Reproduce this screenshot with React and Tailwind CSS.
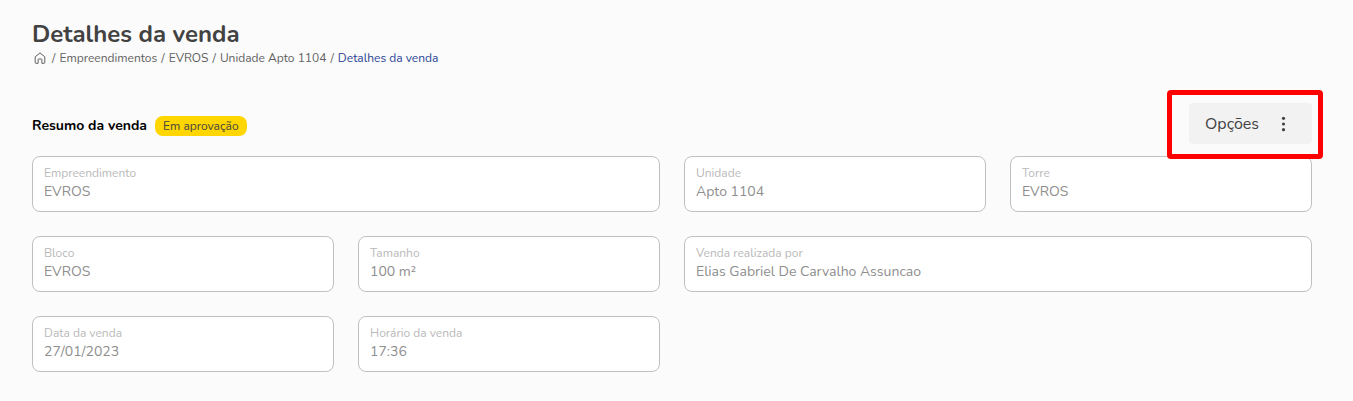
import React, { useId } from "react";

const fields = [
  { label: "Empreendimento", value: "EVROS", span: "col-span-2" },
  { label: "Unidade", value: "Apto 1104", span: "col-span-1" },
  { label: "Torre", value: "EVROS", span: "col-span-1" },
  { label: "Bloco", value: "EVROS", span: "col-span-1" },
  { label: "Tamanho", value: "100 m²", span: "col-span-1" },
  { label: "Venda realizada por", value: "Elias Gabriel De Carvalho Assuncao", span: "col-span-2" },
  { label: "Data da venda", value: "27/01/2023", span: "col-span-1" },
  { label: "Horário da venda", value: "17:36", span: "col-span-1" },
];

const crumbs = ["Empreendimentos", "EVROS", "Unidade Apto 1104"];

function Field({ label, value, span }) {
  const id = useId();
  return (
    <div className={`${span} flex h-14 min-w-0 flex-col gap-px rounded-lg border border-[#c0c0c0] bg-white px-[11px] pt-2`}>
      <label htmlFor={id} className="text-xs leading-4 text-[#b9b9b9]">
        {label}
      </label>
      <input
        id={id}
        type="text"
        readOnly
        defaultValue={value}
        className="h-5 w-full bg-transparent text-sm leading-5 text-[#8e8e8e] outline-none"
      />
    </div>
  );
}

function HomeIcon() {
  return (
    <svg viewBox="0 0 12 12" className="size-3" fill="none" stroke="currentColor" strokeWidth="1" strokeLinejoin="round" aria-hidden="true">
      <path d="M1.2 4.8 6 .9l4.8 3.9v5.7a.8.8 0 0 1-.8.8H7.9V7.6a.6.6 0 0 0-.6-.6H4.7a.6.6 0 0 0-.6.6v3.7H2a.8.8 0 0 1-.8-.8z" />
    </svg>
  );
}

function DotsIcon() {
  return (
    <svg viewBox="0 0 24 24" className="size-6" fill="currentColor" aria-hidden="true">
      <circle cx="11.5" cy="6.3" r="1.6" />
      <circle cx="11.5" cy="12" r="1.6" />
      <circle cx="11.5" cy="17.7" r="1.6" />
    </svg>
  );
}

export default function App() {
  return (
    <main className="min-h-screen bg-[#fbfbfb] pt-4 pr-[41px] pb-7 pl-8 font-['Nunito','Open_Sans',sans-serif] text-[#424242]">
      <h1 className="text-2xl leading-9 font-bold">Detalhes da venda</h1>
      <nav aria-label="Trilha de navegação">
        <ol className="flex items-center gap-1 pl-0.5 text-xs leading-3 text-[#616161]">
          <li>
            <a href="#inicio" aria-label="Início" className="block pr-0.5">
              <HomeIcon />
            </a>
          </li>
          {crumbs.map((crumb) => (
            <li key={crumb} className="flex gap-1">
              <span aria-hidden="true">/</span>
              <a href="#trilha">{crumb}</a>
            </li>
          ))}
          <li className="flex gap-1">
            <span aria-hidden="true">/</span>
            <a href="#detalhes" aria-current="page" className="text-[#2a4494]">
              Detalhes da venda
            </a>
          </li>
        </ol>
      </nav>

      <section className="mt-[39px]">
        <div className="flex items-center justify-between">
          <div className="flex items-center gap-2 pt-1">
            <h2 className="text-sm leading-5 font-bold text-black">Resumo da venda</h2>
            <span className="rounded-lg bg-[#ffd600] px-2 text-xs leading-5 text-[#424242]">Em aprovação</span>
          </div>
          <div className="relative">
            <button type="button" className="flex h-[41px] items-center gap-[13px] rounded-sm bg-[#f2f2f2] px-4 text-base">
              Opções
              <DotsIcon />
            </button>
            <div className="pointer-events-none absolute -top-[13px] -right-[11px] -bottom-[15px] -left-[22px] rounded-sm border-5 border-[#ff0000]" />
          </div>
        </div>
        <div className="mt-3 grid grid-cols-4 gap-6">
          {fields.map((field) => (
            <Field key={field.label} {...field} />
          ))}
        </div>
      </section>
    </main>
  );
}
